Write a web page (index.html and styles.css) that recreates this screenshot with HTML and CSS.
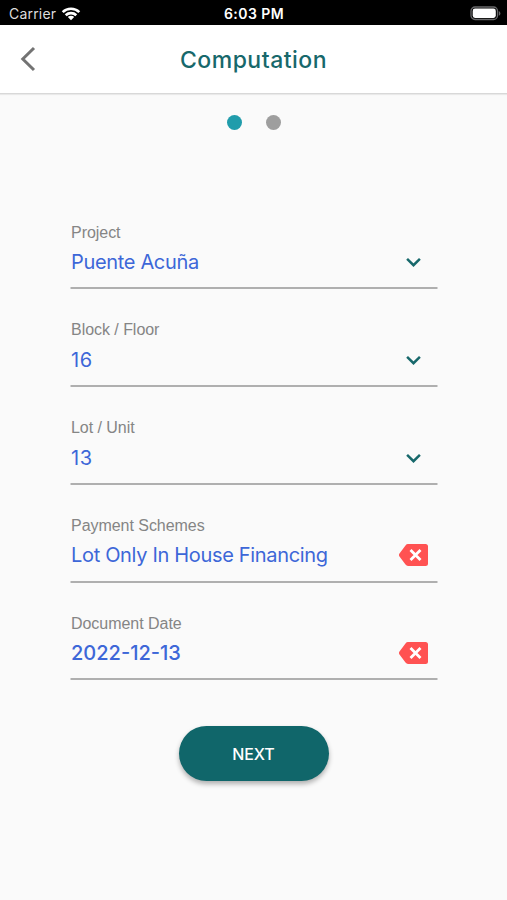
FILE: index.html
```html
<!DOCTYPE html>
<html lang="en">
<head>
<meta charset="utf-8">
<title>Computation</title>
<link rel="stylesheet" href="styles.css">
</head>
<body>
<div class="status">
  <div class="carrier"><span>Carrier</span>
    <svg width="20" height="16" viewBox="0 0 20 16" fill="none" stroke="#fff" stroke-width="2.7"><path d="M1.7 6.1a12 12 0 0 1 16.6 0M4.7 9.3a7.7 7.7 0 0 1 10.6 0"/><path d="M10 14.3 6.8 11.1a4.6 4.6 0 0 1 6.4 0z" fill="#fff" stroke="none"/></svg>
  </div>
  <span class="time">6:03 PM</span>
  <svg class="battery" width="31" height="15" viewBox="0 0 31 15"><rect x="1" y="1" width="26.5" height="12.5" rx="4" fill="none" stroke="#68686a" stroke-width="1.3"/><rect x="2.7" y="2.6" width="23.1" height="9.3" rx="2.3" fill="#fff"/><path d="M28.8 5v4.8q1.6-.8 1.6-2.4T28.8 5z" fill="#68686a"/></svg>
</div>
<header class="header">
  <svg class="back" width="16" height="26" viewBox="0 0 16 26" fill="none" stroke="#737373" stroke-width="3"><path d="M14 2 2.8 13 14 24"/></svg>
  <h1>Computation</h1>
</header>
<div class="steps"><i class="dot active"></i><i class="dot"></i></div>
<main class="form">
  <div class="field"><label>Project</label><div class="row"><span class="value">Puente Acuña</span><svg class="icon" width="30" height="24" viewBox="0 0 30 24"><path class="chevron" d="m8.6 8.8 6.4 6.4 6.4-6.4"/></svg></div></div>
  <div class="field"><label>Block / Floor</label><div class="row"><span class="value number">16</span><svg class="icon" width="30" height="24" viewBox="0 0 30 24"><path class="chevron" d="m8.6 8.8 6.4 6.4 6.4-6.4"/></svg></div></div>
  <div class="field"><label>Lot / Unit</label><div class="row"><span class="value number">13</span><svg class="icon" width="30" height="24" viewBox="0 0 30 24"><path class="chevron" d="m8.6 8.8 6.4 6.4 6.4-6.4"/></svg></div></div>
  <div class="field"><label>Payment Schemes</label><div class="row"><span class="value">Lot Only In House Financing</span><svg class="icon" width="30" height="24" viewBox="0 0 30 24"><path class="tag" d="M9.5 1H27q2.5 0 2.5 2.5v17Q29.500 23 27 23H9.500Q8 23 7 21.600L.8 13.200q-.8-1.200 0-2.400L7 2.400Q8 1 9.500 1z"/><path class="cross" d="m12 7 10 10M22 7 12 17"/></svg></div></div>
  <div class="field"><label>Document Date</label><div class="row"><span class="value date">2022-12-13</span><svg class="icon" width="30" height="24" viewBox="0 0 30 24"><path class="tag" d="M9.5 1H27q2.5 0 2.5 2.5v17Q29.500 23 27 23H9.500Q8 23 7 21.600L.8 13.200q-.8-1.200 0-2.400L7 2.400Q8 1 9.500 1z"/><path class="cross" d="m12 7 10 10M22 7 12 17"/></svg></div></div>
</main>
<button class="next">NEXT</button>
</body>
</html>
```
FILE: styles.css
```css
* { box-sizing: border-box; }
body { margin: 0; height: 900px; background: #fafafa; font-family: Inter, sans-serif; overflow: hidden; }
.status { height: 25px; background: #000; color: #fff; display: grid; grid-template-columns: 1fr auto 1fr; align-items: center; padding: 2px 6px 0 9px; font-size: 14px; }
.carrier { display: flex; align-items: center; gap: 5px; color: #ddd; letter-spacing: .2px; }
.time { font-size: 14px; font-weight: 600; letter-spacing: .45px; transform: translateX(-1px); }
.battery { justify-self: end; }
.header { height: 69px; background: #fff; border-bottom: 1px solid #d8d8d8; box-shadow: 0 1px 1px #e9e9e9; display: grid; grid-template-columns: 40px 1fr 40px; align-items: center; padding: 1px 20px 0; }
h1 { margin: 0; text-align: center; color: #17686b; font-size: 23px; font-weight: 500; letter-spacing: .5px; line-height: 28px; }
.steps { display: flex; justify-content: center; gap: 24px; padding-top: 21px; height: 97.5px; }
.dot { width: 15px; height: 15px; border-radius: 50%; background: #9e9e9e; }
.dot.active { background: #209cab; }
.form { width: 367px; margin: 0 auto; transform: translateX(.5px); }
.field { height: 97.75px; padding-top: 31px; border-bottom: 2px solid #afafaf; }
label { display: block; font: 16px/20px "Liberation Sans", sans-serif; color: #858585; letter-spacing: -.04px; padding-left: .5px; }
.row { display: flex; justify-content: space-between; align-items: center; height: 39px; padding: 0 9.5px 0 .5px; }
.back { margin-top: -1px; }
.value { color: #3d67d8; font-size: 20px; letter-spacing: -.33px; }
.number { letter-spacing: .6px; }
.date { font-weight: 500; letter-spacing: 0; }
.chevron { fill: none; stroke: #17686b; stroke-width: 2.5; }
.tag { fill: #ff5252; }
.cross { fill: none; stroke: #fff; stroke-width: 2.8; }
.next { display: block; width: 150px; height: 55px; margin: 45.5px auto 0; padding: 2px 0 0; border: 0; border-radius: 28px; background: #10666a; color: #fff; font: 500 16px Inter, sans-serif; letter-spacing: -.1px; box-shadow: 0 3px 5px rgba(0,0,0,.3); }
```
